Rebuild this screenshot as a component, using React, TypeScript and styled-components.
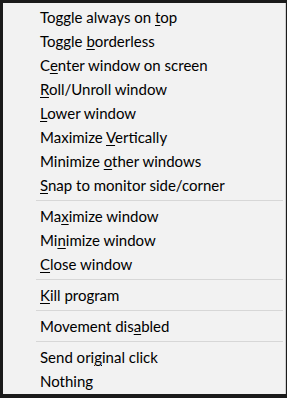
import React from "react";
import styled, { createGlobalStyle } from "styled-components";

const GlobalStyle = createGlobalStyle`
  html, body {
    margin: 0;
    padding: 0;
    background: #1b1b1b;
  }
`;

type Entry = { label: string; key?: number } | "sep";

const entries: Entry[] = [
  { label: "Toggle always on top", key: 17 },
  { label: "Toggle borderless", key: 7 },
  { label: "Center window on screen", key: 1 },
  { label: "Roll/Unroll window", key: 0 },
  { label: "Lower window", key: 0 },
  { label: "Maximize Vertically", key: 9 },
  { label: "Minimize other windows", key: 9 },
  { label: "Snap to monitor side/corner", key: 0 },
  "sep",
  { label: "Maximize window", key: 2 },
  { label: "Minimize window", key: 2 },
  { label: "Close window", key: 0 },
  "sep",
  { label: "Kill program", key: 0 },
  "sep",
  { label: "Movement disabled", key: 12 },
  "sep",
  { label: "Send original click", key: 8 },
  { label: "Nothing" },
];

function Label({ label, mnemonic }: { label: string; mnemonic?: number }) {
  if (mnemonic === undefined) return <>{label}</>;
  return (
    <>
      {label.slice(0, mnemonic)}
      <Mnemonic>{label[mnemonic]}</Mnemonic>
      {label.slice(mnemonic + 1)}
    </>
  );
}

function App() {
  return (
    <>
      <GlobalStyle />
      <Screen>
        <Menu>
          {entries.map((e, i) =>
            e === "sep" ? (
              <Separator key={i} />
            ) : (
              <Item key={i}>
                <Label label={e.label} mnemonic={e.key} />
              </Item>
            )
          )}
        </Menu>
      </Screen>
    </>
  );
}

const Screen = styled.div`
  width: 287px;
  height: 398px;
  padding: 3px 1px 4px 3px;
  box-sizing: border-box;
  display: flex;
`;

const Menu = styled.div`
  flex: 1;
  background: #f2f2f2;
  border-right: 1px solid #cfcfcf;
  padding: 2px 0 1px 0;
  display: flex;
  flex-direction: column;
`;

const Item = styled.div`
  height: 24px;
  line-height: 24px;
  padding-left: 37px;
  font-family: Lato, "Noto Sans", sans-serif;
  font-size: 15px;
  color: #000;
  white-space: nowrap;
`;

const Mnemonic = styled.span`
  text-decoration: underline;
  text-decoration-thickness: 1px;
  text-underline-offset: 2px;
`;

const Separator = styled.div`
  height: 1px;
  background: #d7d7d7;
  margin: 3px 2px 3px 33px;
`;

export default App;
